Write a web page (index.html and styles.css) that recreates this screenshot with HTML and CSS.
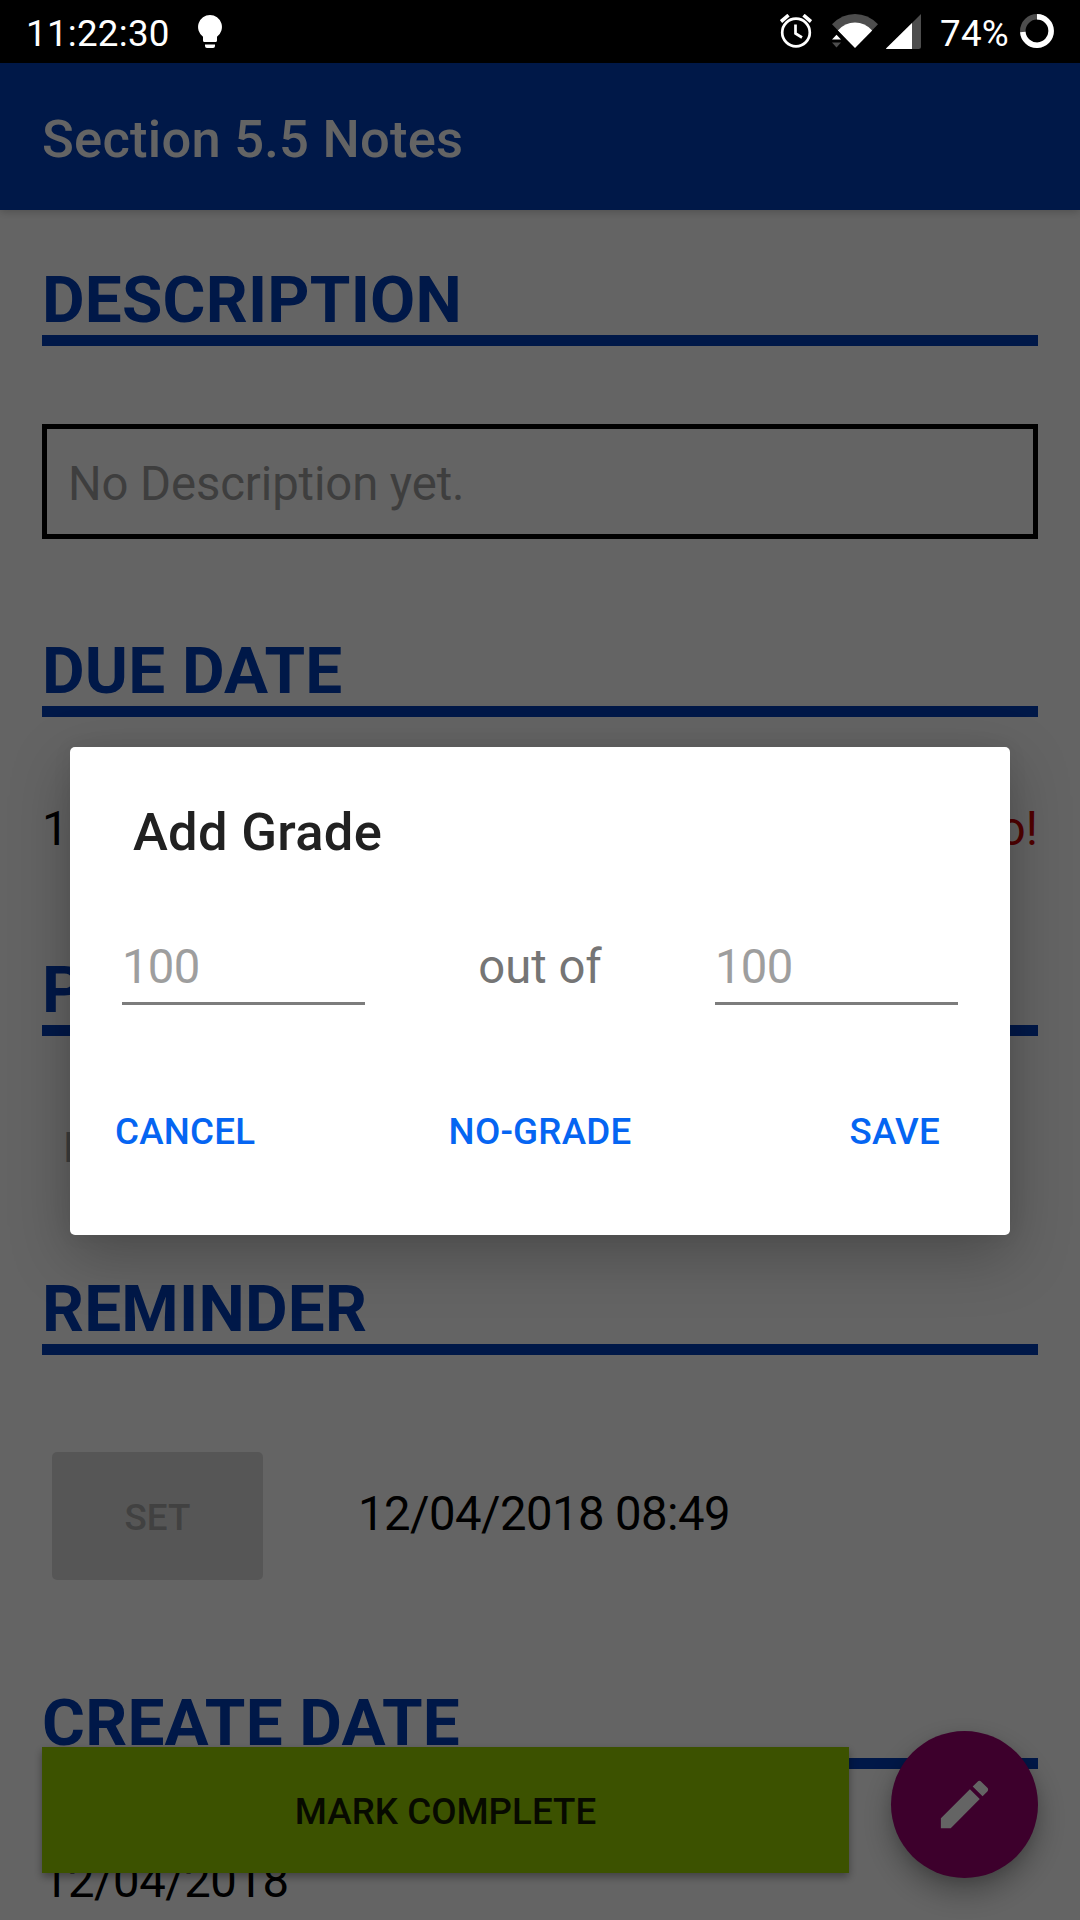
FILE: index.html
```html
<!DOCTYPE html>
<html lang="en">
<head>
<meta charset="utf-8">
<title>Section 5.5 Notes</title>
<link rel="stylesheet" href="styles.css">
</head>
<body>
<div class="screen">
  <header class="status">
    <span class="clock">11:22:30</span>
    <svg class="bulb" viewBox="0 0 24 33"><path fill="#fff" d="M12 0a12 12 0 0 0-7 21.700V25.500q0 1.500 1.500 1.500h11q1.500 0 1.500-1.500V21.700A12 12 0 0 0 12 0zM7 29.500h10v1.500q0 2-2 2H9q-2 0-2-2z"/></svg>
    <svg class="alarm" viewBox="0 0 32 34" fill="none" stroke="#fff"><circle cx="16" cy="18.500" r="13.800" stroke-width="2.700"/><path stroke-width="2.700" d="M15.500 10.500v9l6.500 4"/><path stroke-width="3.600" d="M1 7.500l7.500-6.300M31 7.500l-7.500-6.300"/></svg>
    <svg class="wifi" viewBox="0 0 46 34"><path fill="#4d4d4d" d="M0 10.200Q10 0 23 0t23 10.200L39.500 17 23 33.500 6.500 17z"/><path fill="#fff" d="M5.800 16.500Q13 8.500 23 8.500t17.200 8L23 34z"/><path stroke="#000" stroke-width="3" d="M4.500 17.500l12 13" /><path fill="#fff" d="M0 25.500h9L4.500 20.800z"/><path fill="#4d4d4d" d="M0 28.500h9l-4.500 5z"/></svg>
    <svg class="signal" viewBox="0 0 35 35"><path fill="#4d4d4d" d="M35 0v32.500q0 2.500-2.500 2.500H0z"/><path fill="#fff" d="M26 9v26H1.500Q0 35 0 34.500z"/></svg>
    <span class="percent">74%</span>
    <svg class="ring" viewBox="0 0 34 34" fill="none" stroke-width="5.500"><circle cx="17" cy="17" r="14.200" stroke="#4d4d4d"/><path stroke="#fff" d="M17 2.800A14.200 14.200 0 1 1 2.800 18"/></svg>
  </header>

  <div class="app">
    <div class="appbar">Section 5.5 Notes</div>
    <main class="content">
      <section class="section description">
        <h2>DESCRIPTION</h2>
        <div class="box">No Description yet.</div>
      </section>
      <section class="section due">
        <h2>DUE DATE</h2>
        <div class="row"><span>12/04/2018</span><span class="late">1 day ago!</span></div>
      </section>
      <section class="section priority">
        <h2>PRIORITY</h2>
        <div class="choice">Low</div>
      </section>
      <section class="section reminder">
        <h2>REMINDER</h2>
        <div class="setrow"><button class="set" disabled>SET</button><span class="when">12/04/2018 08:49</span></div>
      </section>
      <section class="section created">
        <h2>CREATE DATE</h2>
        <div class="createdate">12/04/2018</div>
      </section>
    </main>
    <button class="complete">MARK COMPLETE</button>
    <button class="fab" aria-label="Edit"><svg viewBox="0 0 24 24"><path fill="#fafafa" d="M3 17.250V21h3.750L17.810 9.940l-3.750-3.750L3 17.250zM20.710 7.040c.39-.39.39-1.020 0-1.410l-2.340-2.340c-.39-.39-1.020-.39-1.410 0l-1.830 1.830 3.750 3.750 1.830-1.830z"/></svg></button>
    <div class="scrim"></div>
    <div class="dialog" role="dialog">
      <h1>Add Grade</h1>
      <div class="grade">
        <div class="field">100</div>
        <span class="outof">out of</span>
        <div class="field">100</div>
      </div>
      <div class="actions"><button class="cancel">CANCEL</button><button>NO-GRADE</button><button class="save">SAVE</button></div>
    </div>
  </div>
</div>
</body>
</html>
```
FILE: styles.css
```css
* { box-sizing: border-box; }
body { margin: 0; font-family: Roboto, sans-serif; background: #000; }
button { border: 0; padding: 0; margin: 0; font: 500 36.75px/50px Roboto, sans-serif; }
h1, h2 { margin: 0; }
.screen { width: 1080px; height: 1920px; overflow: hidden; display: flex; flex-direction: column; }

.status { height: 63px; flex: none; display: flex; align-items: flex-start; padding: 14px 26px 0 26px; color: #fff; font-size: 36.75px; line-height: 39px; letter-spacing: .25px; }
.status svg { flex: none; display: block; }
.clock { width: 172px; }
.bulb { width: 24px; height: 33px; margin-top: 1px; }
.alarm { width: 32px; height: 34px; margin-left: 558px; }
.wifi { width: 46px; height: 34px; margin-left: 20px; }
.signal { width: 35px; height: 35px; margin-left: 8px; }
.percent { width: 80px; margin-left: 19px; }
.ring { width: 34px; height: 34px; }

.app { position: relative; flex: 1; background: #fafafa; overflow: hidden; }
.appbar { height: 147px; padding-left: 42px; background: #003cb4; color: #fafafa; font-size: 52.5px; font-weight: 500; line-height: 152px; letter-spacing: .24px; box-shadow: 0 2px 8px rgba(0,0,0,.2); }
.content { padding: 53px 42px 0; color: #000; font-size: 47.25px; line-height: 56px; }
.section h2 { height: 83px; border-bottom: 11px solid #003cb4; color: #003cb4; font-size: 65.6px; font-weight: 700; line-height: 73px; letter-spacing: .22px; white-space: nowrap; }
.description { height: 371px; }
.due, .priority { height: 319px; }
.reminder { height: 414px; }
.box { height: 115px; margin-top: 78px; border: 5px solid #000; padding: 27px 21px 0; color: #9c9c9c; letter-spacing: -.1px; }
.row { margin-top: 84px; display: flex; justify-content: space-between; }
.late { color: #c80000; }
.choice { margin: 84px 0 0 21px; font-size: 42px; color: #9c9c9c; }
.setrow { display: flex; align-items: center; margin: 97px 0 0 10px; height: 128px; }
.set { width: 211px; height: 128px; padding-top: 3px; border-radius: 5px; background: #d8d8d8; color: #a2a2a2; }
.when { margin-left: 95px; padding-bottom: 4px; letter-spacing: -.55px; }
.createdate { margin-top: 84px; letter-spacing: -.5px; }

.complete { position: absolute; left: 42px; top: 1684px; width: 807px; height: 126px; padding-top: 3px; background: #96cd00; color: #121900; box-shadow: 0 4px 8px rgba(0,0,0,.35); }
.fab { position: absolute; left: 891px; top: 1668px; width: 147px; height: 147px; border-radius: 50%; background: #98006e; display: flex; align-items: center; justify-content: center; box-shadow: 0 14px 30px rgba(0,0,0,.3), 0 4px 12px rgba(0,0,0,.1); }
.fab svg { width: 63px; height: 63px; }
.scrim { position: absolute; inset: 0; background: rgba(0,0,0,.6); }

.dialog { position: absolute; left: 70px; top: 684px; width: 940px; height: 488px; border-radius: 5px; background: #fff; box-shadow: 0 20px 60px rgba(0,0,0,.25), 0 0 20px rgba(0,0,0,.06); }
.dialog h1 { padding: 55px 0 0 63px; font-size: 52.5px; font-weight: 500; line-height: 60px; letter-spacing: .3px; color: #212121; }
.grade { display: flex; justify-content: space-between; margin: 77px 52px 0; font-size: 47.25px; line-height: 56px; color: #757575; }
.field { width: 243px; height: 66px; border-bottom: 3px solid #7c7c7c; color: #9e9e9e; letter-spacing: -.7px; }
.actions { display: grid; grid-template-columns: 1fr auto 1fr; margin: 102px 45px 0; }
.actions button { background: none; color: #0565f2; letter-spacing: .2px; }
.actions .cancel { justify-self: start; }
.actions .save { justify-self: end; padding-right: 25px; }
```
